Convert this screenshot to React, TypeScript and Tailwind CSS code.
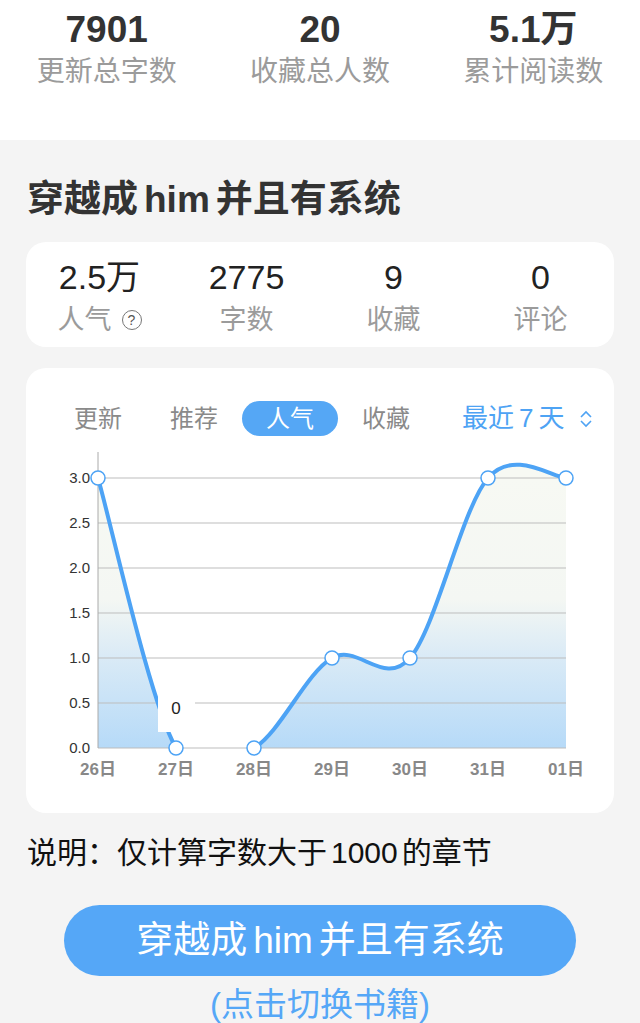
import React from 'react'

const font = { fontFamily: '"Liberation Sans", "Noto Sans CJK SC", sans-serif' }

const topStats = [
  { value: '7901', label: '更新总字数' },
  { value: '20', label: '收藏总人数' },
  { value: '5.1万', label: '累计阅读数' },
]

const bookStats = [
  { value: '2.5万', label: '人气', help: true },
  { value: '2775', label: '字数' },
  { value: '9', label: '收藏' },
  { value: '0', label: '评论' },
]

const tabs = ['更新', '推荐', '人气', '收藏']

// chart data, drawn in page coordinates (viewBox offset below)
const xs = [98, 176, 254, 332, 410, 488, 566]
const days = ['26日', '27日', '28日', '29日', '30日', '31日', '01日']
const values = [3, 0, 0, 1, 1, 3, 3]
const baseY = 748
const step = 90
const pts = xs.map((x, i) => [x, baseY - values[i] * step])

function curve() {
  let d = `M${pts[0][0]},${pts[0][1]}`
  for (let i = 0; i < pts.length - 1; i++) {
    const p0 = pts[Math.max(i - 1, 0)]
    const p1 = pts[i]
    const p2 = pts[i + 1]
    const p3 = pts[Math.min(i + 2, pts.length - 1)]
    const c1 = [p1[0] + (p2[0] - p0[0]) / 6, p1[1] + (p2[1] - p0[1]) / 6]
    const c2 = [p2[0] - (p3[0] - p1[0]) / 6, p2[1] - (p3[1] - p1[1]) / 6]
    d += ` C${c1[0]},${c1[1]} ${c2[0]},${c2[1]} ${p2[0]},${p2[1]}`
  }
  return d
}

function BookName() {
  return (
    <>
      穿越成<span className="mx-[6px]">him</span>并且有系统
    </>
  )
}

function Chart() {
  const line = curve()
  const area = `${line} L566,${baseY} L98,${baseY} Z`
  const grid = [0, 0.5, 1, 1.5, 2, 2.5, 3]
  return (
    <svg width="588" height="345" viewBox="26 445 588 345" className="block">
      <defs>
        <linearGradient id="fill" gradientUnits="userSpaceOnUse" x1="0" y1="478" x2="0" y2="748">
          <stop offset="0" stopColor="#f7f9f3" />
          <stop offset="0.45" stopColor="#f4f7f3" />
          <stop offset="0.65" stopColor="#dbebf6" />
          <stop offset="1" stopColor="#b6daf8" />
        </linearGradient>
        <clipPath id="plot">
          <rect x="90" y="440" width="490" height="308" />
        </clipPath>
      </defs>
      <path d={area} fill="url(#fill)" clipPath="url(#plot)" />
      {grid.map((g) => (
        <g key={g}>
          <line x1="98" x2="566" y1={baseY - g * step} y2={baseY - g * step} stroke="#bdbdbd" strokeWidth="1" />
          <text x="90" y={baseY - g * step + 5} textAnchor="end" fontSize="15" fill="#333" style={font}>
            {g.toFixed(1)}
          </text>
        </g>
      ))}
      <line x1="98" x2="98" y1="452" y2="748" stroke="#aaa" strokeWidth="1" />
      <path d={line} fill="none" stroke="#4da3f5" strokeWidth="4" strokeLinecap="round" clipPath="url(#plot)" />
      {days.map((d, i) => (
        <text key={d} x={xs[i]} y="775" textAnchor="middle" fontSize="17" fontWeight="700" fill="#888" style={font}>
          {d}
        </text>
      ))}
      {pts.map(([x, y], i) => (
        <circle key={i} cx={x} cy={y} r="7" fill="#fff" stroke="#4da3f5" strokeWidth="1.5" />
      ))}
      <rect x="158" y="692" width="37" height="40" fill="#fff" />
      <text x="176" y="714" textAnchor="middle" fontSize="17" fill="#222" style={font}>
        0
      </text>
    </svg>
  )
}

export default function App() {
  return (
    <div className="w-[640px] h-[1023px] overflow-hidden bg-[#f4f4f4]" style={font}>
      <div className="h-[140px] bg-white grid grid-cols-3 pt-[10px]">
        {topStats.map((s) => (
          <div key={s.label} className="flex flex-col items-center">
            <span className="text-[37px] leading-[40px] font-bold text-[#333]">{s.value}</span>
            <span className="mt-[5px] text-[28px] leading-[34px] text-[#9b9b9b]">{s.label}</span>
          </div>
        ))}
      </div>

      <div className="px-[26px]">
        <h1 className="pt-[40px] text-[37px] leading-[40px] font-bold text-[#333] pl-px">
          <BookName />
        </h1>

        <div className="mt-[22px] bg-white rounded-[20px] grid grid-cols-4 pt-[15px] pb-[10px]">
          {bookStats.map((s) => (
            <div key={s.label} className="flex flex-col items-center">
              <span className="text-[34px] leading-[40px] text-[#222]">{s.value}</span>
              <span className="mt-[6px] text-[27px] leading-[34px] text-[#9b9b9b] flex items-center">
                {s.label}
                {s.help && (
                  <span className="ml-[10px] w-[20px] h-[20px] rounded-full border-[1.5px] border-[#777] text-[14px] leading-none text-[#555] flex items-center justify-center">
                    ?
                  </span>
                )}
              </span>
            </div>
          ))}
        </div>

        <div className="mt-[21px] bg-white rounded-[20px] pt-[33px] pb-[23px]">
          <div className="flex items-center h-[35px] pl-[24px]">
            {tabs.map((t) => (
              <span
                key={t}
                className={`w-[96px] h-[35px] flex items-center justify-center text-[24px] rounded-full ${
                  t === '人气' ? 'bg-[#55a7f5] text-white' : 'text-[#8a8a8a]'
                }`}
              >
                {t}
              </span>
            ))}
            <span className="ml-[28px] text-[26px] text-[#4ea3f4] flex items-center">
              最近<span className="mx-[5px]">7</span>天
              <svg width="14" height="20" viewBox="0 0 14 20" className="ml-[14px]" fill="none" stroke="#4ea3f4" strokeWidth="1.6">
                <polyline points="2,8 7,3 12,8" />
                <polyline points="2,12 7,17 12,12" />
              </svg>
            </span>
          </div>
          <div className="mt-[9px]">
            <Chart />
          </div>
        </div>

        <p className="mt-[22px] pl-px text-[30px] leading-[36px] text-[#111]">
          说明：仅计算字数大于<span className="mx-[4px]">1000</span>的章节
        </p>
      </div>

      <div className="mt-[34px] mx-[64px] h-[71px] rounded-full bg-[#55a7f7] flex items-center justify-center text-white text-[37px]">
        <BookName />
      </div>
      <p className="mt-[9px] text-center text-[33px] leading-[40px] text-[#55a7f7]">(点击切换书籍)</p>
    </div>
  )
}
